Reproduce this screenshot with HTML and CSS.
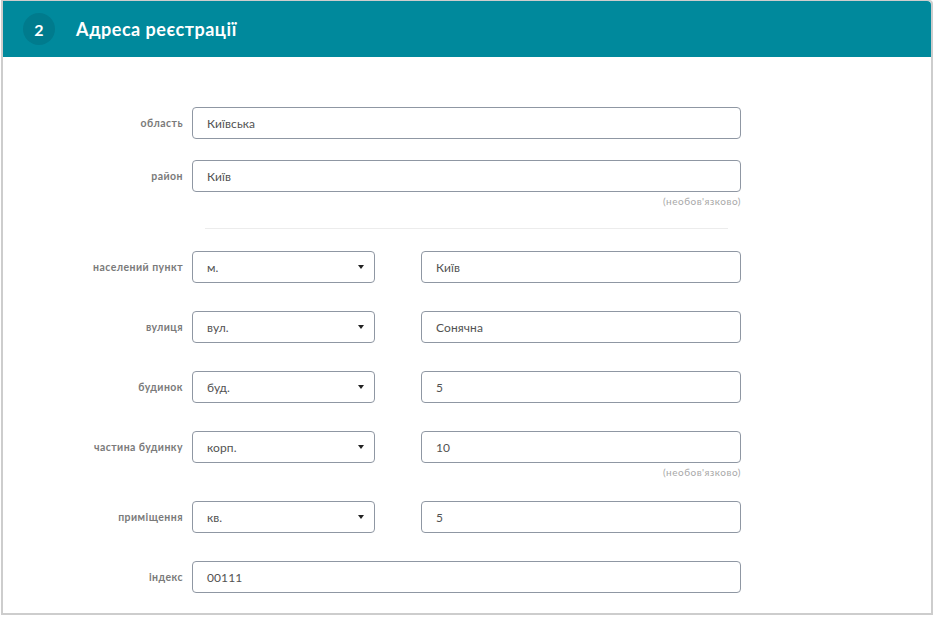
FILE: index.html
```html
<!DOCTYPE html>
<html lang="uk">
<head>
    <meta charset="UTF-8">
    <meta name="viewport" content="width=device-width, initial-scale=1.0">
    <title>Адреса реєстрації</title>
    <link rel="stylesheet" href="styles.css">
</head>
<body>
    <div class="card">
        <div class="card-head">
            <span class="step">2</span>
            <h2 class="title">Адреса реєстрації</h2>
        </div>

        <form class="address">
            <div class="row first">
                <label class="label">область</label>
                <div class="field wide">Київська</div>
            </div>
            <div class="row">
                <label class="label">район</label>
                <div class="field wide">Київ</div>
            </div>
            <div class="note">(необов'язково)</div>

            <div class="divider"></div>

            <div class="row after-line">
                <label class="label">населений пункт</label>
                <div class="field select">м.<span class="arrow"></span></div>
                <div class="field second">Київ</div>
            </div>
            <div class="row">
                <label class="label">вулиця</label>
                <div class="field select">вул.<span class="arrow"></span></div>
                <div class="field second">Сонячна</div>
            </div>
            <div class="row">
                <label class="label">будинок</label>
                <div class="field select">буд.<span class="arrow"></span></div>
                <div class="field second">5</div>
            </div>
            <div class="row">
                <label class="label">частина будинку</label>
                <div class="field select">корп.<span class="arrow"></span></div>
                <div class="field second">10</div>
            </div>
            <div class="note">(необов'язково)</div>
            <div class="row after-note">
                <label class="label">приміщення</label>
                <div class="field select">кв.<span class="arrow"></span></div>
                <div class="field second">5</div>
            </div>
            <div class="row">
                <label class="label">індекс</label>
                <div class="field wide">00111</div>
            </div>
        </form>
    </div>
</body>
</html>
```

FILE: styles.css
```css
*{
    margin: 0;
    padding: 0;
    box-sizing: border-box;
}
body{
    background-color: #fff;
    font-family: Lato, "Noto Sans", sans-serif;
}
.card{
    width: 932px;
    height: 615px;
    margin-left: 1px;
    border: 2px solid #cdcdcd;
    border-top-width: 1px;
    border-radius: 0 4px 0 0;
    background-color: #fff;
}
.card-head{
    height: 56px;
    background-color: #00899c;
    border-radius: 0 4px 0 0;
    display: flex;
    align-items: center;
    padding-left: 20px;
    gap: 21px;
}
.card-head .step{
    width: 32px;
    height: 32px;
    border-radius: 50%;
    background-color: #007b8d;
    color: #fff;
    font-size: 16px;
    font-weight: bold;
    display: flex;
    align-items: center;
    justify-content: center;
}
.card-head .title{
    color: #fff;
    font-size: 18px;
    font-weight: bold;
    letter-spacing: 0.5px;
}
.address{
    padding-top: 50px;
}
.row{
    display: flex;
    align-items: center;
    height: 32px;
    margin-top: 28px;
}
.row.first{
    margin-top: 0;
}
.row.after-line{
    margin-top: 22px;
}
.row.after-note{
    margin-top: 23px;
}
.address .row:nth-child(2){
    margin-top: 21px;
}
.label{
    width: 180px;
    text-align: right;
    font-size: 10.5px;
    font-weight: bold;
    letter-spacing: 0.45px;
    color: #7a7a7a;
    margin-right: 9px;
}
.field{
    height: 32px;
    border: 1.5px solid #8f97a3;
    border-radius: 4px;
    padding-left: 14px;
    font-size: 12px;
    letter-spacing: 0.1px;
    color: #525252;
    display: flex;
    align-items: center;
}
.field.wide{
    width: 549px;
}
.field.select{
    width: 183px;
    position: relative;
}
.field.second{
    width: 320px;
    margin-left: 46px;
}
.arrow{
    position: absolute;
    right: 10px;
    top: 13px;
    border-left: 3px solid transparent;
    border-right: 3px solid transparent;
    border-top: 4px solid #222;
}
.note{
    width: 738px;
    margin-top: 3px;
    text-align: right;
    font-size: 10px;
    letter-spacing: 0.5px;
    line-height: 12px;
    color: #a8a8a8;
}
.divider{
    width: 523px;
    height: 1px;
    margin: 21px 0 0 202px;
    background-color: #ececec;
}
```
